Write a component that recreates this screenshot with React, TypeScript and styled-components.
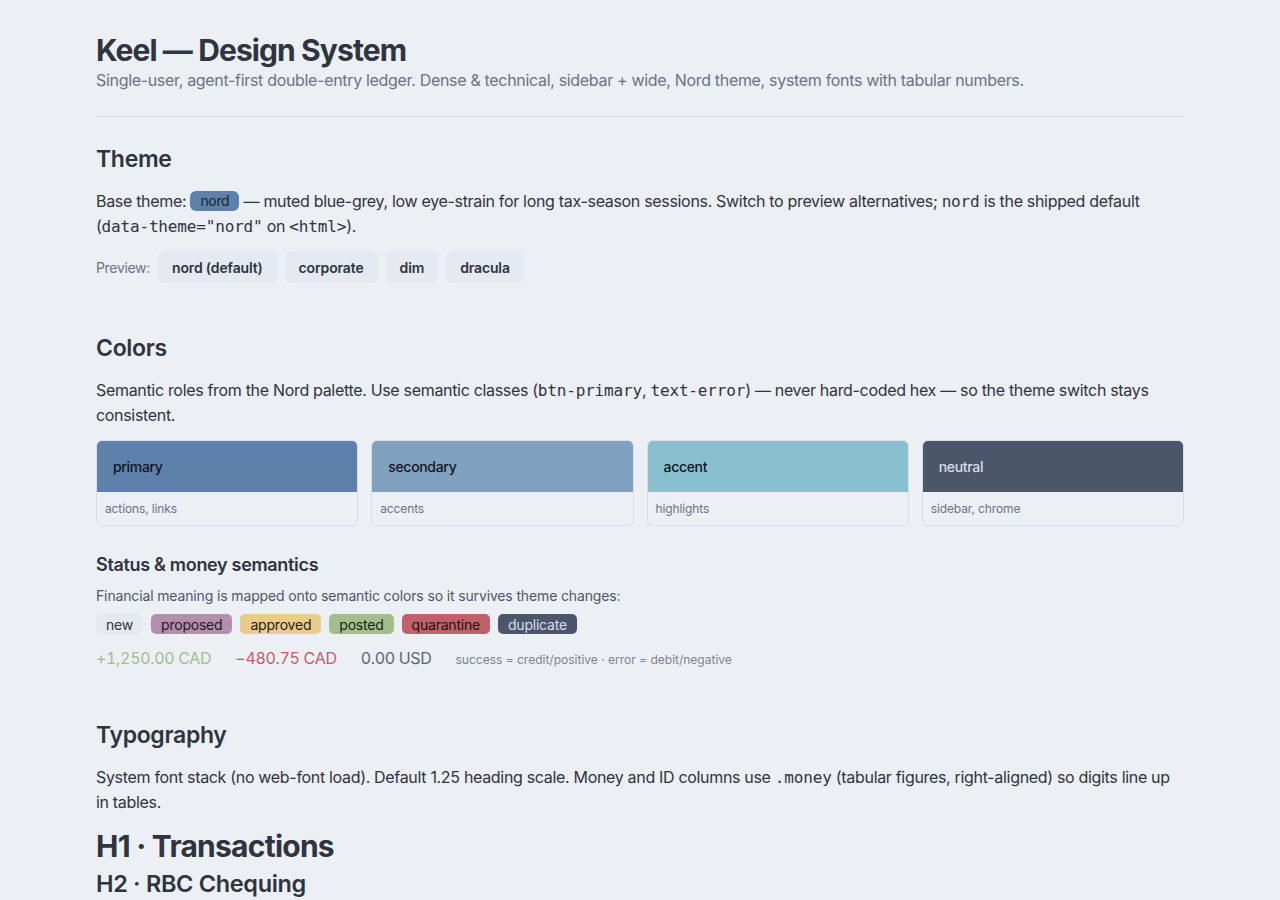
import React from "react";
import styled, { createGlobalStyle } from "styled-components";

const Global = createGlobalStyle`
  html, body { margin: 0; padding: 0; background: #eceff4; }
  body {
    font-family: Inter, "Noto Sans", "Liberation Sans", sans-serif;
    color: #2e3440;
    letter-spacing: -0.02em;
    -webkit-font-smoothing: antialiased;
  }
  * { box-sizing: border-box; }
`;

const Page = styled.main`
  max-width: 1088px;
  margin: 0 auto;
  padding: 32px 0 40px;
`;

const Header = styled.header`
  display: flex;
  flex-direction: column;
  padding-bottom: 24px;
  border-bottom: 1px solid #d8dee9;
`;

const Title = styled.h1`
  margin: 0;
  font-size: 30px;
  line-height: 36px;
  font-weight: 700;
  letter-spacing: -0.03em;
  color: #2e3440;
`;

const Subtitle = styled.p`
  margin: 0;
  font-size: 16px;
  line-height: 24px;
  color: #6b7385;
`;

const Section = styled.section<{ $top: number }>`
  padding-top: ${(p) => p.$top}px;
  display: flex;
  flex-direction: column;
`;

const H2 = styled.h2`
  margin: 0 0 14px;
  font-size: 23px;
  line-height: 32px;
  font-weight: 600;
  color: #2e3440;
`;

const H3 = styled.h3`
  margin: 0 0 9px;
  font-size: 18px;
  line-height: 24px;
  font-weight: 600;
  color: #2e3440;
`;

const Para = styled.p<{ $gap?: number }>`
  margin: 0 0 ${(p) => p.$gap ?? 12}px;
  font-size: 16px;
  line-height: 25px;
  color: #2e3440;
`;

const SmallPara = styled.p`
  margin: 0 0 8px;
  font-size: 14px;
  line-height: 20px;
  letter-spacing: -0.01em;
  color: #4c566a;
`;

const Code = styled.code`
  font-family: "DejaVu Sans Mono", "Liberation Mono", monospace;
  font-size: 16px;
  line-height: 1;
  letter-spacing: -0.01em;
  color: #2e3440;
`;

const ThemeTag = styled.span`
  display: inline-block;
  background: #5e81ac;
  color: #1d2330;
  font-size: 14px;
  line-height: 20px;
  padding: 0 10px;
  border-radius: 6px;
  vertical-align: 1px;
`;

const PreviewRow = styled.div`
  display: flex;
  align-items: center;
  gap: 8px;
`;

const PreviewLabel = styled.span`
  font-size: 14px;
  color: #6b7385;
`;

const PreviewButton = styled.button`
  height: 32px;
  padding: 0 14px;
  border: none;
  border-radius: 6px;
  background: #e5e9f0;
  font-family: inherit;
  letter-spacing: -0.01em;
  font-size: 14px;
  font-weight: 600;
  color: #2e3440;
  cursor: pointer;
`;

const SwatchGrid = styled.div`
  display: grid;
  grid-template-columns: repeat(4, 1fr);
  gap: 13px;
  margin-bottom: 27px;
`;

const Swatch = styled.div`
  border: 1px solid #d8dee9;
  border-radius: 6px;
  overflow: hidden;
  display: flex;
  flex-direction: column;
`;

const SwatchBand = styled.div<{ $bg: string; $fg: string }>`
  height: 51px;
  background: ${(p) => p.$bg};
  color: ${(p) => p.$fg};
  display: flex;
  align-items: center;
  padding-left: 16px;
  font-size: 14px;
  font-weight: 500;
`;

const SwatchCaption = styled.div`
  height: 33px;
  display: flex;
  align-items: center;
  padding-left: 8px;
  font-size: 12px;
  letter-spacing: -0.01em;
  color: #6b7385;
`;

const BadgeRow = styled.div`
  display: flex;
  gap: 8px;
  align-items: center;
  margin-bottom: 14px;
`;

const Badge = styled.span<{ $bg: string; $fg: string }>`
  display: inline-flex;
  align-items: center;
  height: 20px;
  padding: 0 10px;
  border-radius: 5px;
  background: ${(p) => p.$bg};
  color: ${(p) => p.$fg};
  font-size: 14px;
  letter-spacing: -0.015em;
`;

const MoneyRow = styled.div`
  display: flex;
  align-items: baseline;
  gap: 24px;
`;

const Money = styled.span<{ $color: string }>`
  font-size: 16px;
  font-variant-numeric: tabular-nums;
  color: ${(p) => p.$color};
  font-weight: 400;
`;

const Note = styled.span`
  font-size: 12px;
  letter-spacing: 0;
  color: #7b8394;
`;

const DemoH1 = styled.div`
  font-size: 30px;
  line-height: 38px;
  font-weight: 700;
  letter-spacing: -0.025em;
  color: #2e3440;
`;

const DemoH2 = styled.div`
  font-size: 23.5px;
  line-height: 38px;
  font-weight: 600;
  color: #2e3440;
`;

const swatches = [
  { name: "primary", bg: "#5e81ac", fg: "#11161f", caption: "actions, links" },
  { name: "secondary", bg: "#81a1c1", fg: "#11161f", caption: "accents" },
  { name: "accent", bg: "#88c0d0", fg: "#11161f", caption: "highlights" },
  { name: "neutral", bg: "#4c566a", fg: "#d8dee9", caption: "sidebar, chrome" },
];

const badges = [
  { label: "new", bg: "#e5e9f0", fg: "#2e3440" },
  { label: "proposed", bg: "#b48ead", fg: "#1d1a22" },
  { label: "approved", bg: "#ebcb8b", fg: "#1f1d15" },
  { label: "posted", bg: "#a3be8c", fg: "#1a1f16" },
  { label: "quarantine", bg: "#bf616a", fg: "#1f0e10" },
  { label: "duplicate", bg: "#4c566a", fg: "#d8dee9" },
];

export default function App() {
  return (
    <>
      <Global />
      <Page>
        <Header>
          <Title>Keel — Design System</Title>
          <Subtitle>
            Single-user, agent-first double-entry ledger. Dense &amp; technical, sidebar + wide, Nord theme, system
            fonts with tabular numbers.
          </Subtitle>
        </Header>

        <Section $top={26}>
          <H2>Theme</H2>
          <Para>
            Base theme: <ThemeTag>nord</ThemeTag> — muted blue-grey, low eye-strain for long tax-season sessions.
            Switch to preview alternatives; <Code>nord</Code> is the shipped default (
            <Code>data-theme="nord"</Code> on <Code>&lt;html&gt;</Code>).
          </Para>
          <PreviewRow>
            <PreviewLabel>Preview:</PreviewLabel>
            <PreviewButton>nord (default)</PreviewButton>
            <PreviewButton>corporate</PreviewButton>
            <PreviewButton>dim</PreviewButton>
            <PreviewButton>dracula</PreviewButton>
          </PreviewRow>
        </Section>

        <Section $top={49}>
          <H2>Colors</H2>
          <Para $gap={12}>
            Semantic roles from the Nord palette. Use semantic classes (<Code>btn-primary</Code>,{" "}
            <Code>text-error</Code>) — never hard-coded hex — so the theme switch stays consistent.
          </Para>
          <SwatchGrid>
            {swatches.map((s) => (
              <Swatch key={s.name}>
                <SwatchBand $bg={s.bg} $fg={s.fg}>
                  {s.name}
                </SwatchBand>
                <SwatchCaption>{s.caption}</SwatchCaption>
              </Swatch>
            ))}
          </SwatchGrid>
          <H3>Status &amp; money semantics</H3>
          <SmallPara>Financial meaning is mapped onto semantic colors so it survives theme changes:</SmallPara>
          <BadgeRow>
            {badges.map((b) => (
              <Badge key={b.label} $bg={b.bg} $fg={b.fg}>
                {b.label}
              </Badge>
            ))}
          </BadgeRow>
          <MoneyRow>
            <Money $color="#a3be8c">+1,250.00 CAD</Money>
            <Money $color="#bf616a">−480.75 CAD</Money>
            <Money $color="#5c6577">0.00 USD</Money>
            <Note>success = credit/positive · error = debit/negative</Note>
          </MoneyRow>
        </Section>

        <Section $top={51}>
          <H2>Typography</H2>
          <Para $gap={12}>
            System font stack (no web-font load). Default 1.25 heading scale. Money and ID columns use{" "}
            <Code>.money</Code> (tabular figures, right-aligned) so digits line up in tables.
          </Para>
          <DemoH1>H1 · Transactions</DemoH1>
          <DemoH2>H2 · RBC Chequing</DemoH2>
        </Section>
      </Page>
    </>
  );
}
